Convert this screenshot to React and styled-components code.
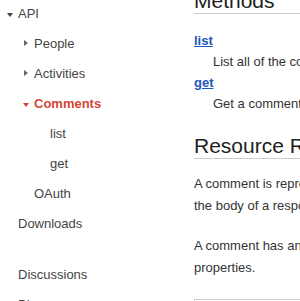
import styled, { createGlobalStyle } from "styled-components";

const GlobalStyle = createGlobalStyle`
  html, body {
    margin: 0;
    padding: 0;
    background: #fff;
    overflow: hidden;
  }
  body {
    font-family: "Liberation Sans", Arial, sans-serif;
    font-size: 13px;
    color: #333;
  }
`;

const nav = [
  { label: "API", level: 1, arrow: "down" },
  { label: "People", level: 2, arrow: "right" },
  { label: "Activities", level: 2, arrow: "right" },
  { label: "Comments", level: 2, arrow: "down", active: true },
  { label: "list", level: 3 },
  { label: "get", level: 3 },
  { label: "OAuth", level: 2 },
  { label: "Downloads", level: 1 },
  { label: "Discussions", level: 1, gap: true },
  { label: "Blog", level: 1 },
];

const methods = [
  { name: "list", text: "List all of the comments for an activity." },
  { name: "get", text: "Get a comment." },
];

const App = () => {
  return (
    <>
      <GlobalStyle />
      <Page>
        <Sidebar>
          {nav.map((item) => (
            <Item
              key={item.label}
              $level={item.level}
              $active={item.active}
              $gap={item.gap}
            >
              <Toggle>{item.arrow && <Arrow $dir={item.arrow} $active={item.active} />}</Toggle>
              {item.label}
            </Item>
          ))}
        </Sidebar>
        <Main>
          <Heading>Methods</Heading>
          <MethodList>
            {methods.map((m) => (
              <div key={m.name}>
                <dt>
                  <MethodLink href="#">{m.name}</MethodLink>
                </dt>
                <dd>{m.text}</dd>
              </div>
            ))}
          </MethodList>
          <Heading $spaced>Resource Representation</Heading>
          <Para>
            A comment is represented as a JSON structure in
            <br />
            the body of a response.
          </Para>
          <Para>
            A comment has an id, an actor, an object and the following
            <br />
            properties.
          </Para>
          <Table />
        </Main>
      </Page>
    </>
  );
};

const Page = styled.div`
  display: flex;
  align-items: flex-start;
  width: 700px;
`;

const Sidebar = styled.ul`
  list-style: none;
  margin: -2px 0 0 0;
  padding: 0;
  width: 194px;
  flex-shrink: 0;
`;

const Item = styled.li`
  display: flex;
  align-items: center;
  height: 30px;
  padding-left: ${(p) => p.$level * 16 - 9}px;
  margin-top: ${(p) => (p.$gap ? "21px" : "0")};
  color: ${(p) => (p.$active ? "#d14836" : "#444")};
  font-weight: ${(p) => (p.$active ? "bold" : "normal")};
  white-space: nowrap;
`;

const Toggle = styled.span`
  display: inline-flex;
  width: 11px;
  flex-shrink: 0;
`;

const Arrow = styled.span`
  display: block;
  width: 0;
  height: 0;
  ${(p) =>
    p.$dir === "down"
      ? `
    margin-top: 3px;
    border-left: 3px solid transparent;
    border-right: 3px solid transparent;
    border-top: 4px solid ${p.$active ? "#d14836" : "#444"};
  `
      : `
    margin-left: 1px;
    border-top: 3px solid transparent;
    border-bottom: 3px solid transparent;
    border-left: 4px solid #666;
  `}
`;

const Main = styled.div`
  margin-top: -11px;
  width: 500px;
  flex-shrink: 0;
`;

const Heading = styled.h2`
  margin: ${(p) => (p.$spaced ? "20px" : "0")} 0 0 0;
  font-size: 21px;
  font-weight: normal;
  line-height: normal;
  color: #222;
  border-bottom: 1px solid #ccc;
  white-space: nowrap;
`;

const MethodList = styled.dl`
  margin: 16px 0 0 0;
  line-height: 21px;

  dt {
    margin: 0;
    font-weight: bold;
  }

  dd {
    margin: 0 0 0 19px;
    white-space: nowrap;
  }
`;

const MethodLink = styled.a`
  color: #2255bb;
  text-decoration: underline;
`;

const Para = styled.p`
  margin: 14px 0 18px 0;
  line-height: 22px;
  white-space: nowrap;
`;

const Table = styled.div`
  margin-top: 20px;
  height: 60px;
  border: 1px solid #ccc;
`;

export default App;
